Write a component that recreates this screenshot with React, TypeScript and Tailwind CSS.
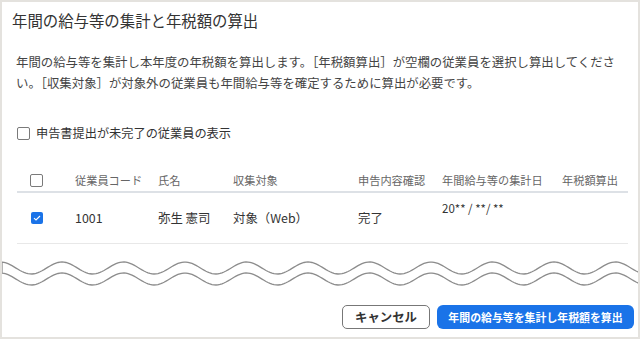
import React from "react";

const FONT = '"Noto Sans CJK JP", "Noto Sans", sans-serif';

function wavePoints(cy: number): [number, number][] {
  const pts: [number, number][] = [];
  for (let x = 0; x <= 640; x += 2) {
    const y = cy - 6 * Math.cos((2 * Math.PI * (x + 1.5)) / 61.5);
    pts.push([x, y]);
  }
  return pts;
}

function Wave() {
  const up = wavePoints(10);
  const lo = wavePoints(21).reverse();
  const d =
    "M" +
    up.map((p) => `${p[0]},${p[1].toFixed(2)}`).join(" L") +
    " L" +
    lo.map((p) => `${p[0]},${p[1].toFixed(2)}`).join(" L") +
    " Z";
  return (
    <svg
      className="absolute left-0 top-[256px]"
      width="640"
      height="32"
      viewBox="0 0 640 32"
    >
      <path d={d} fill="#ffffff" stroke="#8c8c8c" strokeWidth="1.3" />
    </svg>
  );
}

function Box({ checked = false }: { checked?: boolean }) {
  if (checked) {
    return (
      <span className="flex h-[12px] w-[12px] items-center justify-center rounded-[2px] bg-[#1a73e8]">
        <svg width="8" height="6" viewBox="0 0 8 6">
          <path d="M1 3.2 L3 5 L7 1" fill="none" stroke="#fff" strokeWidth="1.1" />
        </svg>
      </span>
    );
  }
  return <span className="block h-[13px] w-[13px] rounded-[2px] border border-[#7a7a7a] bg-white" />;
}

const cols = "grid grid-cols-[58px_83px_75px_125px_84px_120px_66px]";

export default function App() {
  return (
    <div
      className="relative flex h-[339px] w-[640px] flex-col overflow-hidden border-2 border-[#e4e2de] bg-white"
      style={{ fontFamily: FONT }}
    >
      <div className="ml-[10px] mt-[8px] text-[15.4px] leading-[21px] text-[#333]">
        年間の給与等の集計と年税額の算出
      </div>
      <div className="ml-[14px] mt-[21px] whitespace-nowrap text-[12.4px] leading-[21px] text-[#444]">
        年間の給与等を集計し本年度の年税額を算出します。［年税額算出］が空欄の従業員を選択し算出してくださ
        <br />
        い。［収集対象］が対象外の従業員も年間給与等を確定するために算出が必要です。
      </div>
      <div className="ml-[15px] mt-[31px] flex h-[16px] items-center gap-[6px] text-[12.2px] text-[#333]">
        <Box />
        <span>申告書提出が未完了の従業員の表示</span>
      </div>
      <div className="ml-[15px] mr-[10px] mt-[29px]">
        <div className={`${cols} h-[23px] items-center border-b-2 border-[#dde1e6] text-[11.2px] text-[#666]`}>
          <div className="pl-[13px]">
            <Box />
          </div>
          <div>従業員コード</div>
          <div>氏名</div>
          <div>収集対象</div>
          <div>申告内容確認</div>
          <div>年間給与等の集計日</div>
          <div>年税額算出</div>
        </div>
        <div className={`${cols} h-[51px] items-center border-b border-[#e8e8e8] text-[12.4px] text-[#333]`}>
          <div className="pl-[14px]">
            <Box checked />
          </div>
          <div>1001</div>
          <div>弥生 憲司</div>
          <div>対象（Web）</div>
          <div>完了</div>
          <div className="self-start pt-[7px] text-[11.5px]">20** / **/ **</div>
          <div></div>
        </div>
      </div>
      <Wave />
      <div className="mt-auto flex justify-end gap-[7px] pb-[8px] pr-[4px]">
        <button className="flex h-[24px] w-[88px] items-center justify-center rounded-[5px] border-[1.5px] border-[#777] bg-white text-[12.4px] font-bold text-[#333]">
          キャンセル
        </button>
        <button className="flex h-[24px] w-[197px] items-center justify-center rounded-[6px] bg-[#1a73e8] text-[10.9px] font-bold text-white">
          年間の給与等を集計し年税額を算出
        </button>
      </div>
    </div>
  );
}
